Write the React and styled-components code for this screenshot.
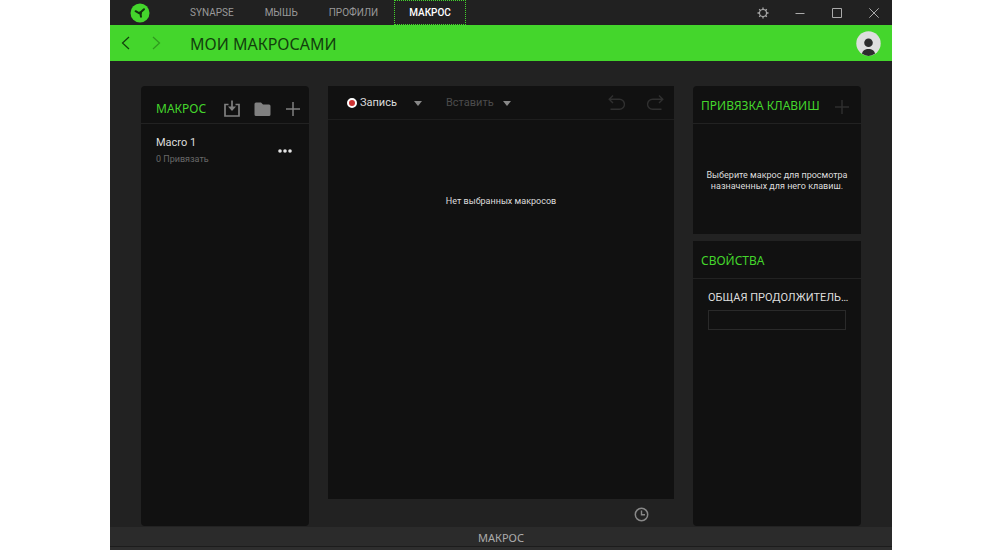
import React from "react";
import styled, { createGlobalStyle, css } from "styled-components";

const GlobalStyle = createGlobalStyle`
  * { box-sizing: border-box; }
  body {
    margin: 0;
    background: #fff;
    font-family: Roboto, "Liberation Sans", sans-serif;
    font-size: 11px;
    color: #ddd;
  }
  button { font: inherit; color: inherit; background: none; border: 0; padding: 0; margin: 0; }
  h1, h2, p, ul { margin: 0; padding: 0; }
  svg { display: block; }
`;

const Page = styled.div`
  min-height: 100vh;
  padding: 0 108px 0 110px;
  display: flex;
`;

const Window = styled.div`
  flex: 1;
  min-width: 0;
  display: flex;
  flex-direction: column;
  background: #222;
`;

const TitleBar = styled.header`
  height: 25px;
  display: flex;
  align-items: stretch;
  background: #212121;
`;

const LogoSlot = styled.div`
  width: 65px;
  display: flex;
  align-items: center;
  padding-left: 20px;
`;

const Tabs = styled.nav`
  display: flex;
  flex: 1;
  gap: 1px;
`;

const Tab = styled.a`
  display: flex;
  align-items: center;
  padding: 0 14px;
  border: 1px dotted transparent;
  font-size: 10px;
  color: #999;
  text-decoration: none;
  ${({ $active }) => $active && css`
    color: #fff;
    font-weight: 500;
    border-color: #44d62c;
  `}
`;

const WindowButtons = styled.div`
  display: flex;
  color: #aaa;
`;

const WindowButton = styled.button`
  width: 37px;
  display: flex;
  align-items: center;
  justify-content: center;
`;

const PageBar = styled.div`
  height: 36px;
  display: flex;
  align-items: center;
  padding: 0 11px 0 10px;
  background: #44d62c;
  color: #123f0c;
`;

const NavButton = styled.button`
  width: 12px;
  margin-right: 18px;
  opacity: ${({ disabled }) => (disabled ? 0.4 : 1)};
`;

const PageTitle = styled.h1`
  flex: 1;
  padding: 2px 0 0 10px;
  font: 400 16px/22px "Noto Sans", sans-serif;
`;

const Workspace = styled.main`
  flex: 1;
  display: grid;
  grid-template-columns: 168px minmax(0, 1fr) 168px;
  gap: 19px;
  padding: 25px 31px 1px;
`;

const Panel = styled.section`
  display: flex;
  flex-direction: column;
  min-width: 0;
  flex: ${({ $grow }) => ($grow ? "1" : "none")};
  min-height: ${({ $min }) => $min || "0"};
  background: #111;
  border-radius: ${({ $radius }) => $radius || "0"};
`;

const SideColumn = styled.div`
  display: flex;
  flex-direction: column;
  gap: 7px;
`;

const PanelHeader = styled.div`
  height: 38px;
  display: flex;
  align-items: center;
  padding: ${({ $pad }) => $pad};
  border-bottom: 1px solid #222;
`;

const PanelTitle = styled.h2`
  flex: 1;
  padding-top: ${({ $low }) => ($low ? "8px" : "2px")};
  font: 400 12px/18px "Noto Sans", sans-serif;
  color: #44d62c;
  white-space: nowrap;
`;

const PanelActions = styled.div`
  display: flex;
  align-items: center;
  gap: 14px;
  padding-top: ${({ $low }) => ($low ? "8px" : "5px")};
  color: ${({ $dim }) => ($dim ? "#2e2e2e" : "#808080")};
`;

const MacroList = styled.ul`
  list-style: none;
  padding: 11px 17px 0 15px;
`;

const MacroRow = styled.li`
  display: flex;
  align-items: center;
  justify-content: space-between;
`;

const MacroName = styled.div`
  font-size: 11px;
  line-height: 16px;
`;

const MacroNote = styled.div`
  font-size: 9px;
  line-height: 16px;
  color: #686868;
`;

const Toolbar = styled.div`
  height: 34px;
  display: flex;
  align-items: center;
  padding: 0 10px 0 19px;
  border-bottom: 1px solid #1e1e1e;
`;

const MenuButton = styled.button`
  display: flex;
  align-items: center;
  margin-right: 24px;
  line-height: 16px;
  color: ${({ disabled }) => (disabled ? "#4c4c4c" : "#ddd")};
`;

const RecordDot = styled.span`
  width: 10px;
  height: 10px;
  margin-right: 3px;
  border: 2px solid #fff;
  border-radius: 50%;
  background: #cc3333;
`;

const Caret = styled.span`
  margin: 2px 0 0 ${({ $wide }) => ($wide ? "17px" : "9px")};
  border: 4px solid transparent;
  border-top: 5px solid #888;
  border-bottom: 0;
`;

const History = styled.div`
  display: flex;
  gap: 22px;
  margin-left: auto;
  color: #303030;
`;

const EmptyMessage = styled.p`
  flex: 1;
  padding-top: 73px;
  text-align: center;
  font-size: 9px;
  line-height: 16px;
`;

const EditorFooter = styled.div`
  height: 27px;
  display: flex;
  align-items: center;
  justify-content: flex-end;
  padding: 3px 25px 0 0;
  background: #222;
  color: #888;
`;

const Hint = styled.p`
  flex: 1;
  display: flex;
  align-items: center;
  justify-content: center;
  padding: 4px 8px 0;
  text-align: center;
  font-size: 9px;
  line-height: 11px;
`;

const Field = styled.label`
  display: block;
  padding: 11px 15px;
`;

const FieldName = styled.span`
  display: block;
  white-space: nowrap;
  line-height: 16px;
`;

const FieldInput = styled.input`
  display: block;
  width: 100%;
  height: 20px;
  margin-top: 4px;
  padding: 0 4px;
  border: 1px solid #2a2a2a;
  background: #111;
  color: #ddd;
`;

const StatusBar = styled.footer`
  height: 23px;
  text-align: center;
  background: #2b2b2b;
  border-bottom: 3px solid #2e2e2e;
  box-shadow: inset 0 -1px #1c1c1c;
  font: 400 11px/22px "Noto Sans", sans-serif;
  color: #ababab;
`;

const Line = (props) => (
  <svg fill="none" stroke="currentColor" aria-hidden="true" {...props} />
);

const Logo = () => (
  <svg width="20" height="20" viewBox="0 0 20 20" aria-hidden="true">
    <circle cx="10" cy="10" r="9.5" fill="#44d62c" />
    <path d="M5.6 8.2 9 10.2 11 9 14 6.2M10.2 9.6 11 13.8" fill="none" stroke="#12330e" strokeWidth="2" strokeLinecap="round" />
    <path d="M8 9.3 12 8 11.8 11.6 9.6 11.2Z" fill="#12330e" />
  </svg>
);

const Gear = () => (
  <Line width="12" height="12" viewBox="0 0 12 12">
    <circle cx="6" cy="6" r="3.5" strokeWidth="1.1" />
    <path d="M6 .5v2M6 9.5v2M.5 6h2M9.5 6h2M2.2 2.2l1.3 1.3M8.5 8.5l1.3 1.3M9.8 2.2 8.5 3.5M3.5 8.5 2.2 9.8" strokeWidth="1.3" />
  </Line>
);

const Chevron = ({ right }) => (
  <Line width="12" height="14" viewBox="0 0 12 14">
    <path d={right ? "M3 1 9.5 7 3 13" : "M9 1 2.5 7 9 13"} strokeWidth="1.2" />
  </Line>
);

const Avatar = () => (
  <svg width="25" height="25" viewBox="0 0 25 25" aria-hidden="true">
    <circle cx="12.5" cy="12.5" r="12.2" fill="#dedede" />
    <circle cx="12.5" cy="11.8" r="4.3" fill="#2d2d2d" />
    <path d="M6 22.8c.3-3 3-4.8 6.5-4.8s6.2 1.8 6.5 4.8a12 12 0 0 1-13 0Z" fill="#2d2d2d" />
  </svg>
);

const Import = () => (
  <Line width="16" height="18" viewBox="0 0 16 18">
    <path d="M4.500 4.500H1v11.500h14V4.500h-3.500M8 .5V10" strokeWidth="1.700" />
    <path d="M4 6.500 8 11l4-4.500Z" fill="currentColor" stroke="none" />
  </Line>
);

const Folder = () => (
  <svg width="17" height="18" viewBox="0 0 17 18" aria-hidden="true">
    <path d="M2 2.500h5l2 2h6A1.500 1.500 0 0 1 16.500 6v8.500A1.500 1.500 0 0 1 15 16H2A1.500 1.500 0 0 1 .5 14.500V4A1.500 1.500 0 0 1 2 2.500Z" fill="currentColor" />
  </svg>
);

const Plus = () => (
  <Line width="16" height="16" viewBox="0 0 16 16">
    <path d="M8 1v14M1 8h14" strokeWidth="1.5" />
  </Line>
);

const Dots = () => (
  <svg width="14" height="4" viewBox="0 0 14 4" fill="#e4e4e4" aria-hidden="true">
    <circle cx="2" cy="2" r="1.8" />
    <circle cx="7" cy="2" r="1.8" />
    <circle cx="12" cy="2" r="1.8" />
  </svg>
);

const Undo = () => (
  <Line width="17" height="16" viewBox="0 0 17 16">
    <path d="M5 .5 1.2 4.3 5 8M1.2 4.3H11.500a4.900 4.900 0 0 1 0 9.900H2.500" strokeWidth="1.4" />
  </Line>
);

const Redo = () => (
  <Line width="17" height="16" viewBox="0 0 17 16">
    <path d="M12 .5 15.8 4.3 12 8M15.8 4.3H5.500a4.900 4.900 0 0 0 0 9.900H14.500" strokeWidth="1.4" />
  </Line>
);

const Clock = () => (
  <Line width="15" height="15" viewBox="0 0 15 15">
    <circle cx="7.5" cy="7.5" r="6.2" strokeWidth="1.5" />
    <path d="M7.5 3.5v4.200H11" strokeWidth="1.4" />
  </Line>
);

const tabs = ["SYNAPSE", "МЫШЬ", "ПРОФИЛИ", "МАКРОС"];

const windowActions = [
  ["Свернуть", "M.5 5.5h9"],
  ["Развернуть", "M.5.5h9v9h-9Z"],
  ["Закрыть", "M.3.3l9.4 9.4M9.7.3.3 9.7"],
];

export default function App() {
  return (
    <Page>
      <GlobalStyle />
      <Window>
        <TitleBar>
          <LogoSlot><Logo /></LogoSlot>
          <Tabs>
            {tabs.map((name) => (
              <Tab key={name} href="#" $active={name === "МАКРОС"}>{name}</Tab>
            ))}
          </Tabs>
          <WindowButtons>
            <WindowButton aria-label="Настройки"><Gear /></WindowButton>
            {windowActions.map(([label, d]) => (
              <WindowButton key={label} aria-label={label}>
                <Line width="10" height="10" viewBox="0 0 10 10"><path d={d} /></Line>
              </WindowButton>
            ))}
          </WindowButtons>
        </TitleBar>

        <PageBar>
          <NavButton aria-label="Назад"><Chevron /></NavButton>
          <NavButton aria-label="Вперёд" disabled><Chevron right /></NavButton>
          <PageTitle>МОИ МАКРОСАМИ</PageTitle>
          <button aria-label="Профиль"><Avatar /></button>
        </PageBar>

        <Workspace>
          <Panel $radius="4px">
            <PanelHeader $pad="0 8px 0 15px">
              <PanelTitle $low>МАКРОС</PanelTitle>
              <PanelActions $low>
                <button aria-label="Импорт"><Import /></button>
                <button aria-label="Папка"><Folder /></button>
                <button aria-label="Добавить макрос"><Plus /></button>
              </PanelActions>
            </PanelHeader>
            <MacroList>
              <MacroRow>
                <div>
                  <MacroName>Macro 1</MacroName>
                  <MacroNote>0 Привязать</MacroNote>
                </div>
                <button aria-label="Ещё"><Dots /></button>
              </MacroRow>
            </MacroList>
          </Panel>

          <Panel>
            <Toolbar>
              <MenuButton><RecordDot />Запись<Caret $wide /></MenuButton>
              <MenuButton disabled>Вставить<Caret /></MenuButton>
              <History>
                <button aria-label="Отменить" disabled><Undo /></button>
                <button aria-label="Повторить" disabled><Redo /></button>
              </History>
            </Toolbar>
            <EmptyMessage>Нет выбранных макросов</EmptyMessage>
            <EditorFooter>
              <button aria-label="Задержка"><Clock /></button>
            </EditorFooter>
          </Panel>

          <SideColumn>
            <Panel $min="148px" $radius="4px 4px 0 0">
              <PanelHeader $pad="0 11px 0 8px">
                <PanelTitle>ПРИВЯЗКА КЛАВИШ</PanelTitle>
                <PanelActions $dim>
                  <button aria-label="Добавить привязку" disabled><Plus /></button>
                </PanelActions>
              </PanelHeader>
              <Hint>Выберите макрос для просмотра назначенных для него клавиш.</Hint>
            </Panel>
            <Panel $grow $radius="0 0 4px 4px">
              <PanelHeader $pad="0 8px">
                <PanelTitle>СВОЙСТВА</PanelTitle>
              </PanelHeader>
              <Field>
                <FieldName>ОБЩАЯ ПРОДОЛЖИТЕЛЬ…</FieldName>
                <FieldInput type="text" />
              </Field>
            </Panel>
          </SideColumn>
        </Workspace>

        <StatusBar>МАКРОС</StatusBar>
      </Window>
    </Page>
  );
}
